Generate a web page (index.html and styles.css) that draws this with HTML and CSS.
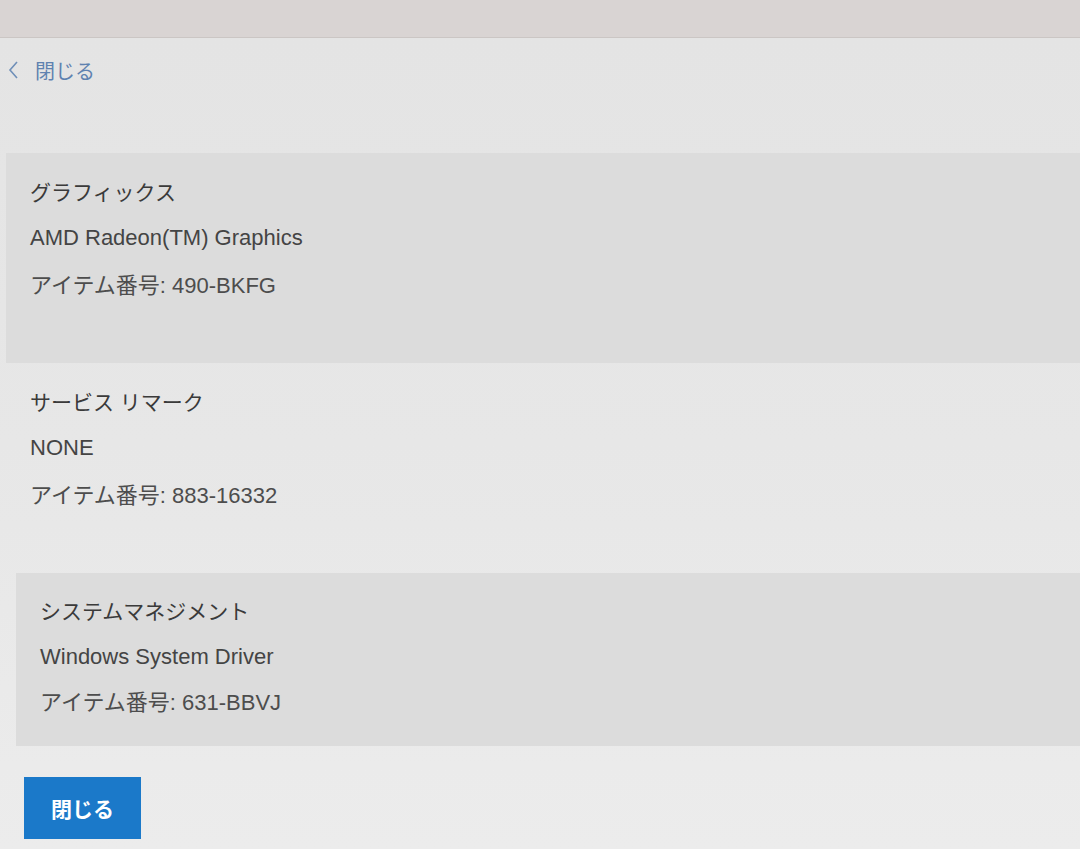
FILE: index.html
```html
<!DOCTYPE html>
<html lang="ja">

<head>
    <meta charset="UTF-8">
    <meta name="viewport" content="width=device-width, initial-scale=1.0">
    <title>構成の詳細</title>
    <link rel="stylesheet" href="styles.css">
</head>

<body>
    <div class="topbar"></div>

    <div class="page">
        <a class="back-link" href="#">
            <svg class="back-icon" width="12" height="20" viewBox="0 0 12 20">
                <path d="M10 2 L3 10 L10 18" fill="none" stroke="#6f8fb8" stroke-width="1.6" />
            </svg>
            <span>閉じる</span>
        </a>

        <div class="spec-list">
            <div class="spec spec-shaded">
                <div class="spec-title">グラフィックス</div>
                <div class="spec-value">AMD Radeon(TM) Graphics</div>
                <div class="spec-item">アイテム番号: 490-BKFG</div>
            </div>
            <div class="spec">
                <div class="spec-title">サービス リマーク</div>
                <div class="spec-value">NONE</div>
                <div class="spec-item">アイテム番号: 883-16332</div>
            </div>
            <div class="spec spec-shaded spec-short">
                <div class="spec-title">システムマネジメント</div>
                <div class="spec-value">Windows System Driver</div>
                <div class="spec-item">アイテム番号: 631-BBVJ</div>
            </div>
        </div>

        <button class="close-button" type="button">閉じる</button>
    </div>
</body>

</html>
```

FILE: styles.css
```css
body {
    font-family: "Liberation Sans", Arial, "Noto Sans CJK JP", sans-serif;
    background-color: #e8e8e8;
    color: #3d3d3d;
    margin: 0;
    padding: 0;
    height: 100vh;
    overflow: hidden;
}

.topbar {
    height: 37px;
    background-color: #d9d4d3;
    border-bottom: 1px solid #cbc6c4;
}

.page {
    background: linear-gradient(to bottom, #e4e4e4 0%, #e7e7e7 50%, #ececec 100%);
    height: 811px;
}

.back-link {
    display: flex;
    align-items: center;
    gap: 16px;
    height: 64px;
    padding-left: 7px;
    color: #5f82b0;
    font-size: 20px;
    text-decoration: none;
}

.back-icon {
    flex-shrink: 0;
}

.spec-list {
    margin-top: 51px;
    padding-left: 6px;
}

.spec {
    min-height: 210px;
    padding: 26px 24px 30px;
    box-sizing: border-box;
}

.spec-shaded {
    background-color: #dcdcdc;
}

.spec-short {
    min-height: 171px;
    margin-left: 10px;
    padding-top: 25px;
}

.spec-title,
.spec-value,
.spec-item {
    font-size: 22px;
    line-height: 27px;
}

.spec-title {
    font-size: 21px;
    color: #3a3a3a;
}

.spec-value {
    margin-top: 18px;
    color: #444;
}

.spec-item {
    margin-top: 21px;
    color: #4d4d4d;
}

.spec-short .spec-item {
    margin-top: 19px;
}

.close-button {
    margin: 31px 0 0 24px;
    width: 117px;
    height: 62px;
    border: none;
    background-color: #1b79c9;
    color: #fff;
    font-family: "Liberation Sans", Arial, "Noto Sans CJK JP", sans-serif;
    font-size: 21px;
    font-weight: bold;
    cursor: pointer;
}
```
